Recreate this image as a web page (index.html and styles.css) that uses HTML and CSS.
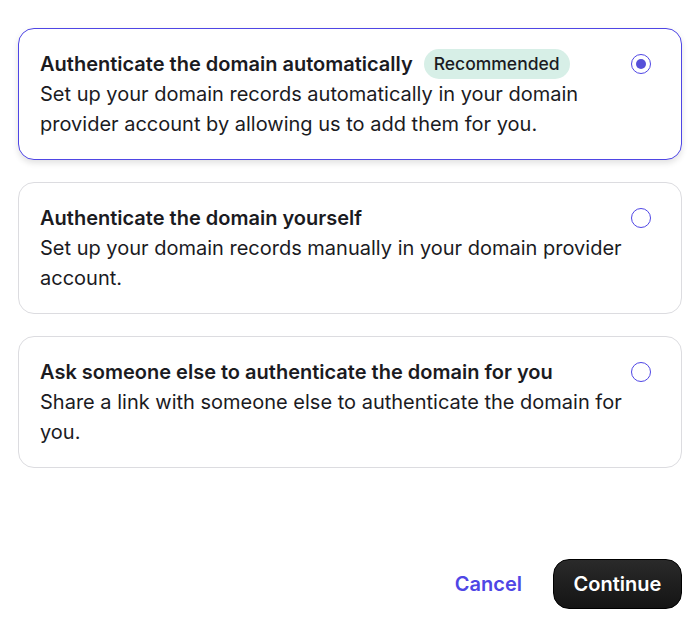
FILE: index.html
```html
<!DOCTYPE html>
<html lang="en">
<head>
<meta charset="utf-8">
<link rel="stylesheet" href="styles.css">
</head>
<body>
<div class="page">
  <div class="options">
    <div class="card selected">
      <div class="text">
        <div class="title-row"><span class="title">Authenticate the domain automatically</span><span class="badge">Recommended</span></div>
        <div class="desc">Set up your domain records automatically in your domain provider account by allowing us to add them for you.</div>
      </div>
      <span class="radio checked"></span>
    </div>
    <div class="card">
      <div class="text">
        <div class="title-row"><span class="title">Authenticate the domain yourself</span></div>
        <div class="desc">Set up your domain records manually in your domain provider account.</div>
      </div>
      <span class="radio"></span>
    </div>
    <div class="card">
      <div class="text">
        <div class="title-row"><span class="title">Ask someone else to authenticate the domain for you</span></div>
        <div class="desc">Share a link with someone else to authenticate the domain for you.</div>
      </div>
      <span class="radio"></span>
    </div>
  </div>
  <div class="actions">
    <button class="cancel">Cancel</button>
    <button class="continue">Continue</button>
  </div>
</div>
</body>
</html>
```
FILE: styles.css
```css
* { box-sizing: border-box; }
html, body { margin: 0; padding: 0; background: #fff; }
body {
  font-family: Inter, "Noto Sans", sans-serif;
  color: #1b1b1f;
}
.page {
  padding: 28px 18px 0 18px;
}
.options {
  display: flex;
  flex-direction: column;
  gap: 22px;
}
.card {
  display: flex;
  align-items: flex-start;
  justify-content: space-between;
  border: 1px solid #dcdce0;
  border-radius: 16px;
  padding: 20px 30px 20px 21px;
  background: #fff;
}
.card.selected {
  border-color: #4f46e5;
  box-shadow: 0 3px 6px rgba(0,0,0,0.12);
}
.text { flex: 1; min-width: 0; }
.title-row {
  display: flex;
  align-items: center;
  gap: 11px;
  height: 30px;
}
.title {
  font-size: 20px;
  font-weight: 600;
  line-height: 30px;
}
.badge {
  background: #d7efe7;
  border-radius: 15px;
  height: 30px;
  line-height: 30px;
  padding: 0 10px;
  font-size: 17.5px;
  font-weight: 500;
}
.desc {
  font-size: 20px;
  line-height: 30px;
}
.radio {
  flex: none;
  width: 20px;
  height: 20px;
  border: 1.5px solid #4f46e5;
  border-radius: 50%;
  margin-top: 5px;
  display: flex;
  align-items: center;
  justify-content: center;
}
.radio.checked::after {
  content: "";
  width: 10px;
  height: 10px;
  border-radius: 50%;
  background: #5650d8;
}
.actions {
  display: flex;
  justify-content: flex-end;
  align-items: center;
  gap: 31px;
  margin-top: 91px;
}
button {
  font-family: Inter, "Noto Sans", sans-serif;
  font-size: 20px;
  font-weight: 600;
  border: none;
  cursor: pointer;
}
.cancel {
  background: none;
  color: #4f46e5;
  padding: 0;
}
.continue {
  background: linear-gradient(#2a2a2a, #141414);
  color: #fff;
  height: 50px;
  width: 129px;
  border-radius: 16px;
  border: 1px solid #000;
}
```
